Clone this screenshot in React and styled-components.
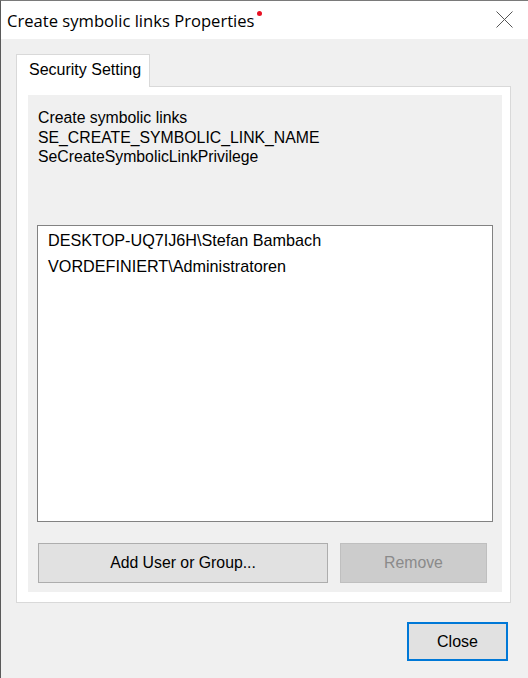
import React from "react";
import styled, { createGlobalStyle } from "styled-components";

const Global = createGlobalStyle`
  html, body { margin: 0; padding: 0; background: #f0f0f0; }
  * { box-sizing: border-box; }
`;

const Window = styled.div`
  width: 528px;
  height: 678px;
  background: #f0f0f0;
  border-left: 1px solid #5a5a5a;
  border-top: 1px solid #7a7a7a;
  display: flex;
  flex-direction: column;
  font-family: "Liberation Sans", Arial, sans-serif;
  color: #000;
  overflow: hidden;
`;

const TitleBar = styled.div`
  height: 38px;
  background: #fff;
  display: flex;
  align-items: center;
  padding-left: 6px;
  position: relative;
  flex-shrink: 0;
`;

const Title = styled.span`
  font-family: "Open Sans", "Noto Sans", sans-serif;
  font-size: 16.6px;
  color: #000;
`;

const Dot = styled.span`
  display: inline-block;
  width: 5px;
  height: 5px;
  border-radius: 50%;
  background: #e81123;
  margin-left: 2px;
  vertical-align: top;
  position: relative;
  top: 2px;
`;

const CloseX = styled.div`
  position: absolute;
  right: 15px;
  top: 10px;
  width: 17px;
  height: 17px;
  display: flex;
  align-items: center;
  justify-content: center;
`;

const Body = styled.div`
  flex: 1;
  padding: 15px 0 0 15px;
  display: flex;
  flex-direction: column;
`;

const TabStrip = styled.div`
  display: flex;
  height: 32px;
  position: relative;
  z-index: 1;
`;

const Tab = styled.div`
  width: 134px;
  height: 33px;
  background: #fff;
  border: 1px solid #d9d9d9;
  border-bottom: none;
  font-size: 16px;
  display: flex;
  align-items: center;
  padding-left: 12px;
  padding-bottom: 2px;
`;

const Panel = styled.div`
  width: 495px;
  height: 517px;
  background: #fff;
  border: 1px solid #d9d9d9;
  padding: 8px 8px 10px 11px;
  display: flex;
`;

const Inner = styled.div`
  flex: 1;
  background: #f0f0f0;
  display: flex;
  flex-direction: column;
  padding: 13px 8px 0 9px;
`;

const InfoText = styled.div`
  font-size: 15.8px;
  line-height: 19.5px;
  padding-left: 1px;
  color: #000;
`;

const ListBox = styled.div`
  margin-top: 58px;
  width: 456px;
  height: 297px;
  background: #fff;
  border: 1px solid #828282;
  padding: 3px 0 0 10px;
`;

const ListItem = styled.div`
  font-size: 16.2px;
  height: 26px;
  line-height: 22px;
`;

const ButtonRow = styled.div`
  display: flex;
  gap: 12px;
  margin-top: 21px;
  padding-left: 1px;
`;

const Button = styled.div`
  width: ${(p) => p.$w}px;
  height: 40px;
  display: flex;
  align-items: center;
  justify-content: center;
  font-size: 15.8px;
  background: ${(p) => (p.$disabled ? "#cccccc" : "#e1e1e1")};
  border: 1px solid ${(p) => (p.$disabled ? "#bfbfbf" : "#adadad")};
  color: ${(p) => (p.$disabled ? "#8a8a8a" : "#000")};
`;

const Footer = styled.div`
  display: flex;
  justify-content: flex-end;
  padding: 19px 20px 0 0;
`;

const CloseButton = styled.div`
  width: 101px;
  height: 39px;
  background: #e1e1e1;
  border: 2px solid #0078d7;
  display: flex;
  align-items: center;
  justify-content: center;
  font-size: 16px;
`;

export default function App() {
  return (
    <>
      <Global />
      <Window>
        <TitleBar>
          <Title>
            Create symbolic links Properties
            <Dot />
          </Title>
          <CloseX>
            <svg width="17" height="17" viewBox="0 0 17 17">
              <path d="M0.5 0.5 L16.5 16.5 M16.5 0.5 L0.5 16.5" stroke="#555" strokeWidth="1" fill="none" />
            </svg>
          </CloseX>
        </TitleBar>
        <Body>
          <TabStrip>
            <Tab>Security Setting</Tab>
          </TabStrip>
          <Panel>
            <Inner>
              <InfoText>Create symbolic links</InfoText>
              <InfoText>SE_CREATE_SYMBOLIC_LINK_NAME</InfoText>
              <InfoText>SeCreateSymbolicLinkPrivilege</InfoText>
              <ListBox>
                <ListItem>DESKTOP-UQ7IJ6H\Stefan Bambach</ListItem>
                <ListItem>VORDEFINIERT\Administratoren</ListItem>
              </ListBox>
              <ButtonRow>
                <Button $w={290}>Add User or Group...</Button>
                <Button $w={147} $disabled>Remove</Button>
              </ButtonRow>
            </Inner>
          </Panel>
          <Footer>
            <CloseButton>Close</CloseButton>
          </Footer>
        </Body>
      </Window>
    </>
  );
}
